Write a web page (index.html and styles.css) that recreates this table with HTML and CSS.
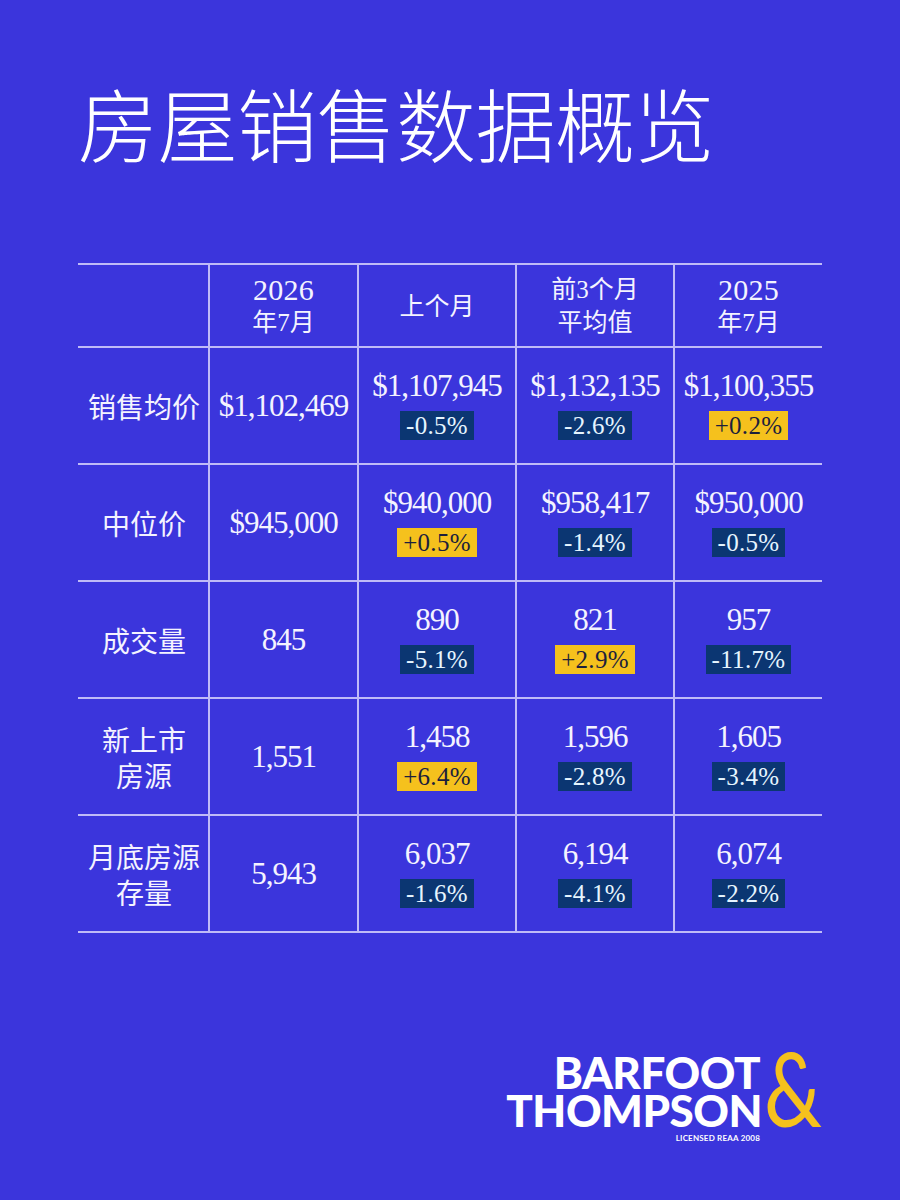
FILE: index.html
```html
<!DOCTYPE html>
<html lang="zh">
<head>
<meta charset="utf-8">
<link rel="stylesheet" href="styles.css">
</head>
<body>
<div class="page">
  <h1 class="title">房屋销售数据概览</h1>

  <div class="table">
    <div class="cell head first"></div>
    <div class="cell head"><span class="num">2026</span><span>年7月</span></div>
    <div class="cell head"><span>上个月</span></div>
    <div class="cell head"><span>前3个月</span><span>平均值</span></div>
    <div class="cell head"><span class="num">2025</span><span>年7月</span></div>

    <div class="cell label first"><span>销售均价</span></div>
    <div class="cell"><span class="val">$1,102,469</span></div>
    <div class="cell"><span class="val">$1,107,945</span><span class="badge neg">-0.5%</span></div>
    <div class="cell"><span class="val">$1,132,135</span><span class="badge neg">-2.6%</span></div>
    <div class="cell"><span class="val">$1,100,355</span><span class="badge pos">+0.2%</span></div>

    <div class="cell label first"><span>中位价</span></div>
    <div class="cell"><span class="val">$945,000</span></div>
    <div class="cell"><span class="val">$940,000</span><span class="badge pos">+0.5%</span></div>
    <div class="cell"><span class="val">$958,417</span><span class="badge neg">-1.4%</span></div>
    <div class="cell"><span class="val">$950,000</span><span class="badge neg">-0.5%</span></div>

    <div class="cell label first"><span>成交量</span></div>
    <div class="cell"><span class="val">845</span></div>
    <div class="cell"><span class="val">890</span><span class="badge neg">-5.1%</span></div>
    <div class="cell"><span class="val">821</span><span class="badge pos">+2.9%</span></div>
    <div class="cell"><span class="val">957</span><span class="badge neg">-11.7%</span></div>

    <div class="cell label first"><span>新上市</span><span>房源</span></div>
    <div class="cell"><span class="val">1,551</span></div>
    <div class="cell"><span class="val">1,458</span><span class="badge pos">+6.4%</span></div>
    <div class="cell"><span class="val">1,596</span><span class="badge neg">-2.8%</span></div>
    <div class="cell"><span class="val">1,605</span><span class="badge neg">-3.4%</span></div>

    <div class="cell label first"><span>月底房源</span><span>存量</span></div>
    <div class="cell"><span class="val">5,943</span></div>
    <div class="cell"><span class="val">6,037</span><span class="badge neg">-1.6%</span></div>
    <div class="cell"><span class="val">6,194</span><span class="badge neg">-4.1%</span></div>
    <div class="cell"><span class="val">6,074</span><span class="badge neg">-2.2%</span></div>
  </div>

  <div class="logo-row">
    <div class="logo">
      <div class="logo-line one">BARFOOT</div>
      <div class="logo-line two">THOMPSON</div>
      <div class="licensed">LICENSED REAA 2008</div>
      <span class="amp">&amp;</span>
    </div>
  </div>
</div>
</body>
</html>
```
FILE: styles.css
```css
* { box-sizing: border-box; }
html, body {
  margin: 0;
  padding: 0;
  background: #3b35dc;
}
body {
  width: 900px;
  height: 1200px;
  overflow: hidden;
  color: #f4f3ff;
  font-family: "Liberation Serif", "Noto Sans CJK SC", serif;
}
.page {
  padding: 81px 78px 0 78px;
}
.title {
  margin: 0;
  font-family: "Noto Sans CJK SC", sans-serif;
  font-weight: 300;
  font-size: 80px;
  line-height: 80px;
  height: 80px;
  color: #ffffff;
  letter-spacing: -0.5px;
}
.table {
  margin-top: 102px;
  width: 744px;
  display: grid;
  grid-template-columns: 130px 149px 158px 158px 149px;
  grid-template-rows: 83px repeat(5, 117px);
  border-bottom: 2px solid rgba(228, 226, 255, 0.78);
}
.cell {
  border-top: 2px solid rgba(228, 226, 255, 0.78);
  border-left: 2px solid rgba(228, 226, 255, 0.78);
  display: flex;
  flex-direction: column;
  align-items: center;
  justify-content: center;
  text-align: center;
}
.cell.first { border-left: none; }
.head {
  font-size: 25px;
  line-height: 33px;
  padding-top: 1px;
}
.head .num {
  font-size: 30px;
  letter-spacing: 0.2px;
}
.label {
  font-family: "Noto Sans CJK SC", sans-serif;
  font-size: 28px;
  line-height: 36px;
  padding-left: 2px;
}
.val {
  font-size: 31px;
  line-height: 30px;
  letter-spacing: -1px;
}
.badge {
  margin-top: 10px;
  height: 29px;
  line-height: 29px;
  padding: 0 6px;
  font-size: 25px;
  letter-spacing: 0.3px;
}
.neg {
  background: #0b3672;
  color: #e6f5ff;
}
.pos {
  background: #f5c11d;
  color: #1d1f3c;
}
.logo-row {
  display: flex;
  justify-content: flex-end;
  margin-top: 120px;
  padding-right: 60px;
}
.logo {
  position: relative;
  display: flex;
  flex-direction: column;
  align-items: flex-end;
  font-family: Lato, "Liberation Sans", sans-serif;
  font-weight: 900;
  color: #ffffff;
}
.logo-line {
  font-size: 44px;
  line-height: 38px;
  letter-spacing: -0.5px;
}
.logo-line.one {
  margin-right: 2px;
}
.licensed {
  margin-top: 4px;
  margin-right: 2px;
  font-size: 8px;
  font-weight: 700;
  letter-spacing: 0.2px;
}
.amp {
  position: absolute;
  left: 100%;
  top: -16px;
  margin-left: 2px;
  font-size: 102px;
  line-height: 102px;
  font-weight: 400;
  color: #f5c11d;
  transform: scaleX(0.8);
  transform-origin: left top;
}
```
